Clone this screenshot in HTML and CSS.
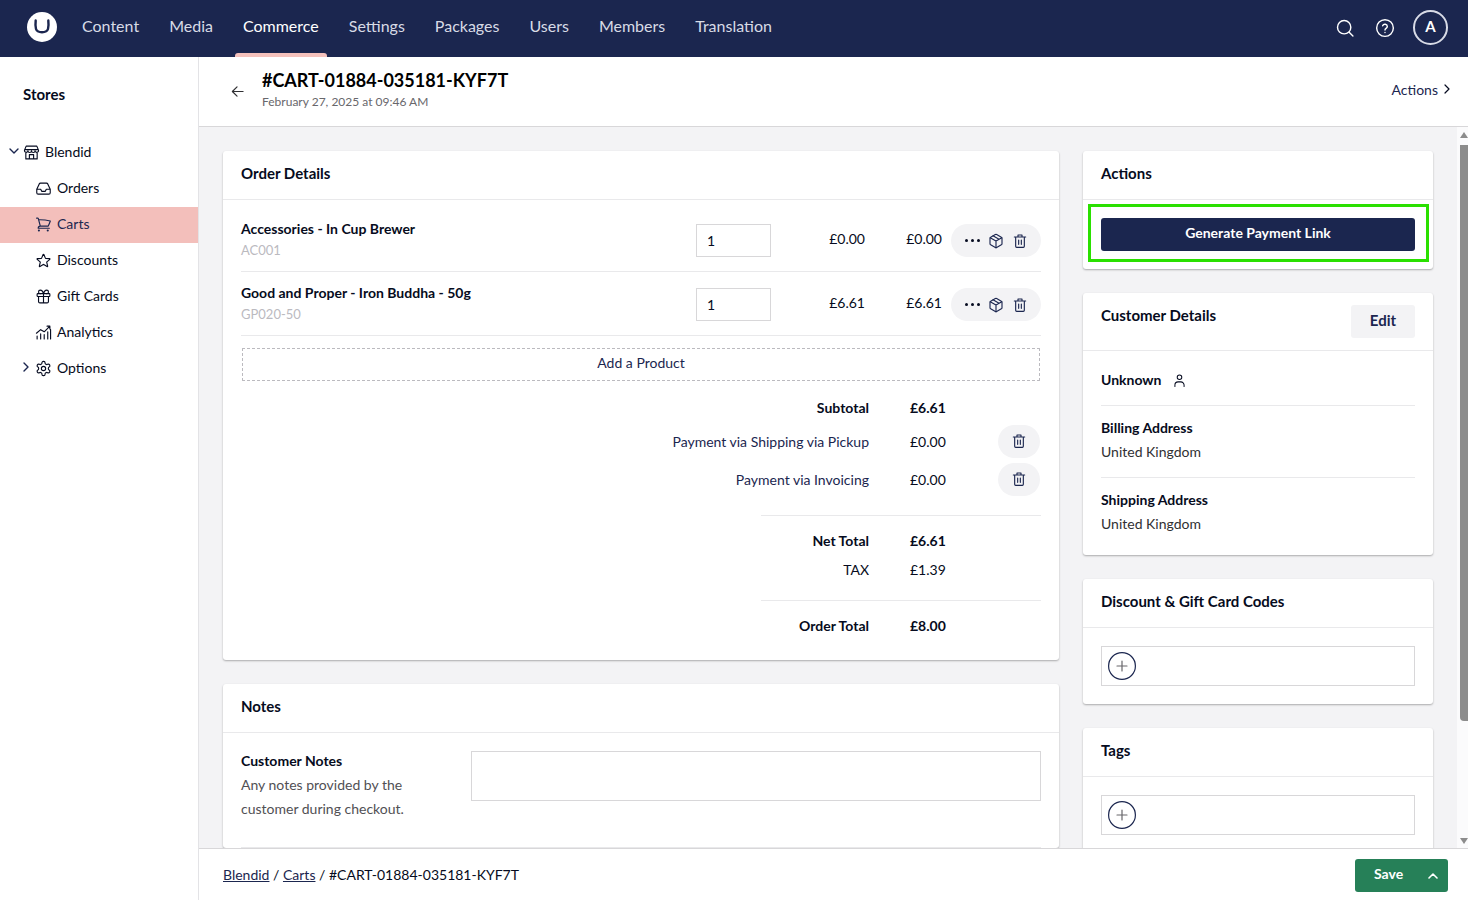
FILE: index.html
```html
<!DOCTYPE html>
<html lang="en">
<head>
    <meta charset="UTF-8">
    <title>Cart #CART-01884-035181-KYF7T</title>
    <link rel="stylesheet" href="styles.css">
</head>
<body>

    <!-- shared icons -->
    <svg class="icon-defs" width="0" height="0">
        <symbol id="i-trash" viewBox="0 0 24 24"><path d="M3.5 6h17M9 6V3h6v3M5.5 6v14a1.5 1.5 0 0 0 1.5 1.5h10a1.5 1.5 0 0 0 1.5-1.5V6M10 10.5v6.5M14 10.5v6.5"/></symbol>
        <symbol id="i-box" viewBox="0 0 24 24"><path d="M21 8a2 2 0 0 0-1-1.73l-7-4a2 2 0 0 0-2 0l-7 4A2 2 0 0 0 3 8v8a2 2 0 0 0 1 1.73l7 4a2 2 0 0 0 2 0l7-4A2 2 0 0 0 21 16Z"/><path d="m3.3 7 8.7 5 8.7-5M12 22V12M7.5 4.27l9 5.15"/></symbol>
        <symbol id="i-plus" viewBox="0 0 28 28"><circle cx="14" cy="14" r="13.4"/><path class="plus-cross" d="M14 9v10M9 14h10"/></symbol>
    </svg>

    <header class="topnav">
        <svg class="logo" viewBox="0 0 30 30"><circle cx="15" cy="15" r="15" fill="#fff"/><path d="M8.700 8.500c-.4 3.500-.3 6.500.3 8.500.7 2.300 2.700 3.200 6 3.200s5.300-.9 6-3.200c.6-2 .7-5 .3-8.500" fill="none" stroke="#1b264f" stroke-width="2.400" stroke-linecap="round"/></svg>
        <nav class="sections">
            <a href="#">Content</a>
            <a href="#">Media</a>
            <a href="#" class="active">Commerce</a>
            <a href="#">Settings</a>
            <a href="#">Packages</a>
            <a href="#">Users</a>
            <a href="#">Members</a>
            <a href="#">Translation</a>
        </nav>
        <div class="tools">
            <svg class="tool-icon search-icon" viewBox="0 0 24 24"><circle cx="11" cy="11" r="8"/><path d="m17 17 4.500 4.500"/></svg>
            <svg class="tool-icon help-icon" viewBox="0 0 24 24"><circle cx="12" cy="12" r="10"/><path d="M9.200 9.300a2.900 2.900 0 0 1 5.600 1c0 1.900-2.800 2.400-2.800 4"/><path d="M12 17.300h.01"/></svg>
            <span class="avatar">A</span>
        </div>
    </header>

    <div class="app">
        <aside class="sidebar">
            <h2 class="sidebar-title">Stores</h2>
            <ul class="tree">
                <li class="tree-item root">
                    <svg class="caret" viewBox="0 0 10 10"><path d="M1 3l4 4 4-4"/></svg>
                    <svg class="tree-icon" viewBox="0 0 24 24"><path d="M4.500 3h15l2.500 6a2.500 2.500 0 0 1-5 .5 2.500 2.500 0 0 1-5 0 2.500 2.500 0 0 1-5 0 2.500 2.500 0 0 1-5-.5zM4 11.500V21h16v-9.500M9 21v-6h6v6M2.500 8h19"/></svg>
                    Blendid
                </li>
                <li class="tree-item">
                    <svg class="tree-icon" viewBox="0 0 24 24"><path d="M2.500 13 6 5.500A2 2 0 0 1 7.800 4.500h8.400a2 2 0 0 1 1.800 1L21.500 13v5a2 2 0 0 1-2 2h-15a2 2 0 0 1-2-2zM2.500 13H8l1.500 3h5L16 13h5.500"/></svg>
                    Orders
                </li>
                <li class="tree-item selected">
                    <svg class="tree-icon" viewBox="0 0 24 24"><path d="M2.250 3h1.386c.51 0 .955.343 1.087.835l.383 1.437M7.500 14.250a3 3 0 0 0-3 3h15.750m-12.750-3h11.218c1.121-2.300 2.100-4.684 2.924-7.138a60.114 60.114 0 0 0-16.536-1.840M7.500 14.250 5.106 5.272"/><circle cx="5.500" cy="20.500" r=".7"/><circle cx="18" cy="20.500" r=".7"/></svg>
                    Carts
                </li>
                <li class="tree-item">
                    <svg class="tree-icon" viewBox="0 0 24 24"><path d="M11.480 3.499a.562.562 0 0 1 1.040 0l2.125 5.111a.563.563 0 0 0 .475.345l5.518.442c.499.040.701.663.321.988l-4.204 3.602a.563.563 0 0 0-.182.557l1.285 5.385a.562.562 0 0 1-.840.610l-4.725-2.885a.562.562 0 0 0-.586 0L6.982 20.540a.562.562 0 0 1-.840-.610l1.285-5.386a.562.562 0 0 0-.182-.557l-4.204-3.602a.563.563 0 0 1 .321-.988l5.518-.442a.563.563 0 0 0 .475-.345L11.480 3.500z"/></svg>
                    Discounts
                </li>
                <li class="tree-item">
                    <svg class="tree-icon" viewBox="0 0 24 24"><rect x="3" y="8" width="18" height="4" rx="1"/><path d="M12 8v13M19 12v7a2 2 0 0 1-2 2H7a2 2 0 0 1-2-2v-7M7.500 8a2.500 2.500 0 0 1 0-5A4.800 8 0 0 1 12 8a4.800 8 0 0 1 4.500-5 2.500 2.500 0 0 1 0 5"/></svg>
                    Gift Cards
                </li>
                <li class="tree-item">
                    <svg class="tree-icon" viewBox="0 0 24 24"><path d="M3 21v-4M8 21v-7M13 21v-6M18 21V11M22 21V8M2 13l6-5 5 3 8-8M17 3h4v4"/></svg>
                    Analytics
                </li>
                <li class="tree-item child-caret">
                    <svg class="caret" viewBox="0 0 10 10"><path d="M3 1l4 4-4 4"/></svg>
                    <svg class="tree-icon" viewBox="0 0 24 24"><path d="M12.220 2h-.44a2 2 0 0 0-2 2v.18a2 2 0 0 1-1 1.730l-.43.25a2 2 0 0 1-2 0l-.15-.08a2 2 0 0 0-2.730.73l-.22.38a2 2 0 0 0 .73 2.730l.15.1a2 2 0 0 1 1 1.720v.51a2 2 0 0 1-1 1.740l-.15.09a2 2 0 0 0-.73 2.730l.22.38a2 2 0 0 0 2.730.73l.15-.08a2 2 0 0 1 2 0l.43.25a2 2 0 0 1 1 1.730V20a2 2 0 0 0 2 2h.44a2 2 0 0 0 2-2v-.18a2 2 0 0 1 1-1.730l.43-.25a2 2 0 0 1 2 0l.15.08a2 2 0 0 0 2.730-.73l.22-.39a2 2 0 0 0-.73-2.730l-.15-.08a2 2 0 0 1-1-1.740v-.5a2 2 0 0 1 1-1.740l.15-.09a2 2 0 0 0 .73-2.730l-.22-.38a2 2 0 0 0-2.730-.73l-.15.08a2 2 0 0 1-2 0l-.43-.25a2 2 0 0 1-1-1.730V4a2 2 0 0 0-2-2z"/><circle cx="12" cy="12" r="3"/></svg>
                    Options
                </li>
            </ul>
        </aside>

        <main class="main">
            <div class="page-head">
                <svg class="back" viewBox="0 0 14 14"><path d="M13 7H1.500M6.500 2 1.500 7l5 5"/></svg>
                <div class="page-title">
                    <h1>#CART-01884-035181-KYF7T</h1>
                    <p>February 27, 2025 at 09:46 AM</p>
                </div>
                <a href="#" class="head-actions">Actions
                    <svg viewBox="0 0 10 12"><path d="M2.500 1l5 5-5 5"/></svg>
                </a>
            </div>

            <div class="body-wrap">
                <div class="content">
                    <div class="col-left">
                        <section class="card">
                            <h3 class="card-title">Order Details</h3>
                            <div class="lines">
                                <div class="line">
                                    <div class="line-name">
                                        <strong>Accessories - In Cup Brewer</strong>
                                        <span class="sku">AC001</span>
                                    </div>
                                    <div class="qty">1</div>
                                    <div class="price">£0.00</div>
                                    <div class="price">£0.00</div>
                                    <div class="line-actions">
                                        <span class="dots"><i></i><i></i><i></i></span>
                                        <svg class="act-icon"><use href="#i-box"/></svg>
                                        <svg class="act-icon"><use href="#i-trash"/></svg>
                                    </div>
                                </div>
                                <div class="line">
                                    <div class="line-name">
                                        <strong>Good and Proper - Iron Buddha - 50g</strong>
                                        <span class="sku">GP020-50</span>
                                    </div>
                                    <div class="qty">1</div>
                                    <div class="price">£6.61</div>
                                    <div class="price">£6.61</div>
                                    <div class="line-actions">
                                        <span class="dots"><i></i><i></i><i></i></span>
                                        <svg class="act-icon"><use href="#i-box"/></svg>
                                        <svg class="act-icon"><use href="#i-trash"/></svg>
                                    </div>
                                </div>
                            </div>
                            <div class="add-product">Add a Product</div>
                            <div class="totals">
                                <div class="total-row subtotal bold"><span class="t-label">Subtotal</span><span class="t-val">£6.61</span></div>
                                <div class="total-row shipping">
                                    <span class="t-label link">Payment via Shipping via Pickup</span><span class="t-val">£0.00</span>
                                    <span class="round-btn"><svg class="act-icon"><use href="#i-trash"/></svg></span>
                                </div>
                                <div class="total-row invoicing">
                                    <span class="t-label link">Payment via Invoicing</span><span class="t-val">£0.00</span>
                                    <span class="round-btn"><svg class="act-icon"><use href="#i-trash"/></svg></span>
                                </div>
                                <div class="total-rule first"></div>
                                <div class="total-row net bold"><span class="t-label">Net Total</span><span class="t-val">£6.61</span></div>
                                <div class="total-row tax"><span class="t-label">TAX</span><span class="t-val">£1.39</span></div>
                                <div class="total-rule second"></div>
                                <div class="total-row grand bold"><span class="t-label">Order Total</span><span class="t-val">£8.00</span></div>
                            </div>
                        </section>

                        <section class="card">
                            <h3 class="card-title">Notes</h3>
                            <div class="note-row">
                                <div class="note-label">
                                    <strong>Customer Notes</strong>
                                    <p>Any notes provided by the<br>customer during checkout.</p>
                                </div>
                                <div class="note-box"></div>
                            </div>
                        </section>
                    </div>

                    <div class="col-right">
                        <section class="card">
                            <h3 class="card-title">Actions</h3>
                            <div class="action-body">
                                <button class="primary-btn">Generate Payment Link</button>
                                <div class="highlight"></div>
                            </div>
                        </section>

                        <section class="card">
                            <div class="card-title with-btn">
                                <h3>Customer Details</h3>
                                <button class="edit-btn">Edit</button>
                            </div>
                            <div class="cust-block unknown">
                                <strong>Unknown</strong>
                                <svg class="user-icon" viewBox="0 0 12 14"><circle cx="6" cy="3.500" r="2.500"/><path d="M1 13.500v-1.500a3.500 3.500 0 0 1 3.500-3.500h3A3.500 3.500 0 0 1 11 12v1.500"/></svg>
                            </div>
                            <div class="cust-block">
                                <strong>Billing Address</strong>
                                <p>United Kingdom</p>
                            </div>
                            <div class="cust-block last">
                                <strong>Shipping Address</strong>
                                <p>United Kingdom</p>
                            </div>
                        </section>

                        <section class="card">
                            <h3 class="card-title">Discount &amp; Gift Card Codes</h3>
                            <div class="tag-body">
                                <div class="tag-input"><svg class="plus"><use href="#i-plus"/></svg></div>
                            </div>
                        </section>

                        <section class="card">
                            <h3 class="card-title">Tags</h3>
                            <div class="tag-body">
                                <div class="tag-input"><svg class="plus"><use href="#i-plus"/></svg></div>
                            </div>
                        </section>
                    </div>
                </div>

                <div class="scrollbar">
                    <span class="arrow up"></span>
                    <span class="thumb"></span>
                    <span class="arrow down"></span>
                </div>
            </div>

            <footer class="bottom">
                <div class="crumbs"><a href="#">Blendid</a> / <a href="#">Carts</a> / #CART-01884-035181-KYF7T</div>
                <div class="save-btn">
                    <span>Save</span>
                    <svg viewBox="0 0 10 6"><path d="M1 5l4-4 4 4"/></svg>
                </div>
            </footer>
        </main>
    </div>

</body>
</html>
```

FILE: styles.css
```css
* {
    box-sizing: border-box;
}

html, body {
    margin: 0;
    height: 100%;
    overflow: hidden;
}

body {
    font-family: Lato, "Liberation Sans", sans-serif;
    font-size: 14px;
    color: #060b20;
    background-color: #fff;
    display: flex;
    flex-direction: column;
}

h1, h2, h3, p, ul {
    margin: 0;
    padding: 0;
}

a {
    color: inherit;
}

svg {
    fill: none;
    stroke: currentColor;
    stroke-linecap: round;
    stroke-linejoin: round;
}

.icon-defs {
    position: absolute;
}

/* top bar */
.topnav {
    height: 57px;
    flex: none;
    background-color: #1b264f;
    display: flex;
    align-items: center;
    padding-left: 27px;
    padding-right: 20px;
}

.logo {
    width: 30px;
    height: 30px;
    stroke: none;
    flex: none;
    margin-bottom: 3px;
}

.sections {
    display: flex;
    height: 100%;
    margin-left: 10px;
}

.sections a {
    position: relative;
    display: flex;
    align-items: center;
    padding: 0 15px 6px;
    font-size: 16px;
    color: #d8dbe6;
    text-decoration: none;
}

.sections a.active {
    color: #fff;
}

.sections a.active::after {
    content: "";
    position: absolute;
    left: 7px;
    right: 7px;
    bottom: 0;
    height: 4px;
    border-radius: 3px 3px 0 0;
    background-color: #f5c1bc;
}

.tools {
    margin-left: auto;
    display: flex;
    align-items: center;
    margin-bottom: 3px;
}

.tool-icon {
    color: #fff;
    stroke-width: 1.7;
}

.search-icon {
    width: 20px;
    height: 20px;
    margin-right: 20px;
    margin-top: 2px;
}

.help-icon {
    width: 20px;
    height: 20px;
    margin-right: 18px;
    margin-top: 2px;
}

.avatar {
    width: 35px;
    height: 35px;
    border: 2px solid #d8dbe6;
    border-radius: 50%;
    color: #fff;
    font-weight: 700;
    font-size: 15px;
    display: flex;
    align-items: center;
    justify-content: center;
    padding-bottom: 3px;
}

.app {
    flex: 1;
    display: flex;
    min-height: 0;
}

/* left tree */
.sidebar {
    width: 199px;
    flex: none;
    border-right: 1px solid #e3e3e6;
}

.sidebar-title {
    height: 78px;
    padding: 27px 0 0 23px;
    font-size: 15px;
    font-weight: 700;
    line-height: 20px;
}

.tree {
    list-style: none;
}

.tree-item {
    height: 36px;
    display: flex;
    align-items: center;
    padding-left: 35px;
    font-size: 14px;
    padding-bottom: 4px;
}

.tree-item.selected {
    background-color: #f3bfbb;
    color: #1b264f;
}

.tree-item.root {
    padding-left: 9px;
}

.tree-item.child-caret {
    padding-left: 21px;
}

.tree-icon {
    width: 17px;
    height: 17px;
    margin-right: 5px;
    flex: none;
    stroke-width: 1.6;
    margin-top: 2px;
}

.root .tree-icon {
    width: 17px;
    height: 17px;
    margin-right: 5px;
}

.caret {
    width: 10px;
    height: 10px;
    flex: none;
    stroke: #1b264f;
    stroke-width: 1.4;
    margin-right: 4px;
}

/* main */
.main {
    flex: 1;
    min-width: 0;
    display: flex;
    flex-direction: column;
}

.page-head {
    height: 70px;
    flex: none;
    border-bottom: 1px solid #d8d7d9;
    display: flex;
    align-items: center;
    padding: 0 17px 0 32px;
}

.back {
    width: 13px;
    height: 13px;
    color: #303033;
    stroke-width: 1.3;
    margin-right: 18px;
    flex: none;
}

.page-title {
    margin-bottom: 4px;
}

.page-title h1 {
    font-size: 18px;
    font-weight: 700;
    line-height: 22px;
    color: #000;
}

.page-title p {
    font-size: 12px;
    line-height: 18px;
    margin-top: 2px;
    color: #68676b;
}

.head-actions {
    margin-left: auto;
    display: flex;
    align-items: center;
    gap: 5px;
    font-size: 14px;
    color: #1b264f;
    text-decoration: none;
    margin-bottom: 4px;
}

.head-actions svg {
    width: 8px;
    height: 12px;
    stroke-width: 1.5;
    color: #060b20;
    margin-bottom: 2px;
}

.body-wrap {
    flex: 1;
    min-height: 0;
    display: flex;
    background-color: #f3f3f5;
}

.content {
    flex: 1;
    min-width: 0;
    overflow: hidden;
    padding: 24px 24px 0;
    display: grid;
    grid-template-columns: 836px 350px;
    column-gap: 24px;
    align-items: start;
}

.col-left, .col-right {
    display: flex;
    flex-direction: column;
    gap: 24px;
}

.card {
    background-color: #fff;
    border-radius: 3px;
    box-shadow: 0 1px 2px rgba(0, 0, 0, 0.3);
    flex: none;
}

.card-title {
    height: 49px;
    padding: 12px 18px 0;
    font-size: 15px;
    font-weight: 700;
    line-height: 20px;
    border-bottom: 1px solid #e9e9eb;
}

.card-title.with-btn {
    height: 58px;
    display: flex;
    justify-content: space-between;
    padding-top: 12px;
}

.card-title.with-btn h3 {
    font-size: 15px;
    line-height: 20px;
}

.edit-btn {
    font-family: inherit;
    font-size: 15px;
    font-weight: 700;
    color: #1b264f;
    background-color: #f3f3f5;
    border: none;
    border-radius: 3px;
    width: 64px;
    height: 33px;
    padding: 0 0 3px;
}

/* order lines */
.lines {
    padding: 8px 18px 0;
}

.line {
    display: grid;
    grid-template-columns: 455px 75px 94px 77px 90px;
    column-gap: 0;
    align-items: start;
    padding: 16px 0 14px;
    border-bottom: 1px solid #e9e9eb;
}

.line-name {
    height: 33px;
}

.line-name strong {
    display: block;
    font-size: 14px;
    line-height: 18px;
    margin-top: -4px;
}

.line-name .sku {
    display: block;
    margin-top: 3px;
    font-size: 13px;
    line-height: 18px;
    color: #bbbabf;
}

.qty {
    height: 33px;
    border: 1px solid #d8d7d9;
    padding: 0 10px;
    line-height: 31px;
    font-size: 14px;
}

.price {
    text-align: right;
    line-height: 29px;
    font-size: 14px;
}

.line-actions {
    margin-left: 9px;
    height: 33px;
    width: 90px;
    border-radius: 17px;
    background-color: #f3f3f5;
    display: flex;
    align-items: center;
    padding-left: 14px;
}

.dots {
    display: flex;
    gap: 3px;
    width: 23px;
}

.dots i {
    width: 3px;
    height: 3px;
    border-radius: 50%;
    background-color: #060b20;
}

.act-icon {
    width: 16px;
    height: 16px;
    stroke-width: 1.7;
    color: #1b264f;
    flex: none;
}

.line-actions .act-icon {
    margin-right: 8px;
    margin-top: 1px;
}

.add-product {
    margin: 12px 19px 0 19px;
    height: 33px;
    border: 1px dashed #bbbabf;
    border-radius: 1px;
    text-align: center;
    line-height: 28px;
    font-size: 14px;
    color: #1b264f;
}

/* totals */
.totals {
    margin-top: 9px;
    padding-bottom: 20px;
}

.total-row {
    display: flex;
    align-items: center;
    font-size: 14px;
    padding-bottom: 0;
}

.t-label {
    width: 646px;
    text-align: right;
}

.t-label.link {
    color: #1b264f;
}

.t-val {
    width: 41px;
    margin-left: 41px;
}

.bold {
    font-weight: 700;
}

.subtotal {
    height: 34px;
}

.shipping {
    height: 34px;
}

.invoicing {
    height: 34px;
    margin-top: 4px;
}

.net {
    height: 30px;
    margin-top: 9px;
}

.tax {
    height: 29px;
}

.grand {
    height: 30px;
    margin-top: 9px;
}

.round-btn {
    width: 42px;
    height: 33px;
    margin-left: 47px;
    border-radius: 17px;
    background-color: #f3f3f5;
    display: flex;
    align-items: center;
    justify-content: center;
}

.total-rule {
    height: 1px;
    background-color: #e9e9eb;
    margin-left: 538px;
    margin-right: 18px;
}

.total-rule.first {
    margin-top: 19px;
}

.total-rule.second {
    margin-top: 16px;
}

/* notes */
.note-row {
    display: grid;
    grid-template-columns: 230px 570px;
    padding: 18px 0 0;
    margin: 0 18px;
    height: 115px;
    border-bottom: 1px solid #e9e9eb;
}

.note-label strong {
    display: block;
    line-height: 20px;
    font-size: 14px;
}

.note-label p {
    margin-top: 2px;
    line-height: 24px;
    color: #515054;
    font-size: 14px;
}

.note-box {
    height: 50px;
    border: 1px solid #d8d7d9;
}

/* right column */
.action-body {
    position: relative;
    padding: 18px;
}

.primary-btn {
    display: block;
    width: 100%;
    height: 33px;
    border: none;
    border-radius: 3px;
    background-color: #1b264f;
    color: #fff;
    font-family: inherit;
    font-size: 14px;
    font-weight: 700;
    padding: 0 0 4px;
}

.highlight {
    position: absolute;
    left: 5px;
    right: 4px;
    top: 4px;
    height: 58px;
    border: 3px solid #2ae000;
}

.cust-block {
    margin: 0 18px;
    padding: 12px 0 15px;
    border-bottom: 1px solid #e9e9eb;
    font-size: 14px;
}

.cust-block strong {
    display: block;
    line-height: 20px;
}

.cust-block p {
    line-height: 20px;
    margin-top: 4px;
    color: #303033;
}

.cust-block.unknown {
    display: flex;
    align-items: center;
    padding: 19px 0 15px;
    height: 55px;
}

.cust-block.last {
    border-bottom: none;
    padding-bottom: 21px;
}

.user-icon {
    width: 11px;
    height: 13px;
    margin-left: 12px;
    stroke-width: 1.1;
}

.tag-body {
    padding: 18px 18px;
}

.tag-input {
    height: 40px;
    border: 1px solid #d8d7d9;
    padding: 5px 6px;
}

.plus {
    display: block;
    width: 28px;
    height: 28px;
    color: #1b264f;
    stroke-width: 1.2;
}

.plus-cross {
    stroke: #68676b;
}

/* fake scrollbar, the real one is not drawn in the screenshot browser */
.scrollbar {
    width: 11px;
    flex: none;
    background-color: #fbfbfc;
    display: flex;
    flex-direction: column;
    align-items: flex-end;
}

.arrow {
    width: 8px;
    height: 0;
    border-left: 4px solid transparent;
    border-right: 4px solid transparent;
}

.arrow.up {
    margin-top: 5px;
    border-bottom: 6px solid #8c8c8c;
}

.thumb {
    width: 8px;
    height: 576px;
    margin-top: 7px;
    background-color: #8c8c8c;
    border-radius: 0 0 0 4px;
}

.arrow.down {
    margin-top: auto;
    margin-bottom: 4px;
    border-top: 6px solid #8c8c8c;
}

/* footer */
.bottom {
    height: 52px;
    flex: none;
    border-top: 1px solid #d8d7d9;
    background-color: #fff;
    display: flex;
    align-items: center;
    justify-content: space-between;
    padding: 0 20px 0 24px;
}

.crumbs {
    font-size: 14px;
}

.crumbs a {
    color: #1b264f;
}

.save-btn {
    width: 93px;
    height: 33px;
    margin-top: 2px;
    background-color: #268058;
    border-radius: 3px;
    color: #fff;
    font-weight: 700;
    font-size: 14px;
    display: flex;
    align-items: center;
    padding: 0 10px 4px 19px;
    justify-content: space-between;
}

.save-btn svg {
    width: 10px;
    height: 6px;
    stroke-width: 1.6;
    margin-top: 4px;
}
```
